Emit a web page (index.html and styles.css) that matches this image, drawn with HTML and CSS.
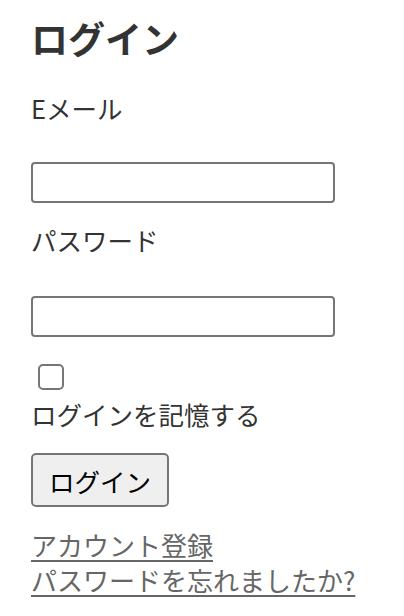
FILE: index.html
```html
<!DOCTYPE html>
<html lang="ja">
<head>
<meta charset="utf-8">
<link rel="stylesheet" href="styles.css">
</head>
<body>
<main class="page">
  <h1 class="title">ログイン</h1>
  <form class="form">
    <label class="label" for="email">Eメール</label>
    <input class="field" id="email" type="email">
    <label class="label label-pw" for="pw">パスワード</label>
    <input class="field field-pw" id="pw" type="password">
    <div class="remember">
      <input class="check" id="remember" type="checkbox">
      <label class="remember-label" for="remember">ログインを記憶する</label>
    </div>
    <div class="actions"><button class="btn" type="button">ログイン</button></div>
  </form>
  <nav class="links">
    <a class="link" href="#">アカウント登録</a>
    <a class="link" href="#">パスワードを忘れましたか?</a>
  </nav>
</main>
</body>
</html>
```

FILE: styles.css
```css
html, body {
  margin: 0;
  padding: 0;
  background: #fff;
}
body {
  font-family: "Noto Sans CJK JP", "Noto Sans", sans-serif;
  font-size: 25.5px;
  line-height: 35px;
  color: #333;
}
.page {
  padding: 12px 31px 0 31px;
}
.title {
  margin: 0;
  font-size: 37px;
  line-height: 52px;
  font-weight: 700;
  color: #333;
}
.form {
  display: flex;
  flex-direction: column;
  align-items: flex-start;
  margin-top: 26px;
}
.label {
  display: block;
}
.field {
  box-sizing: border-box;
  width: 304px;
  height: 41px;
  margin: 37px 0 0 0;
  border: 2px solid #767676;
  border-radius: 4px;
  background: #fff;
  font: inherit;
  padding: 0 6px;
}
.field-pw {
  margin-top: 39px;
}
.label-pw {
  margin-top: 19px;
}
.remember {
  display: flex;
  flex-direction: column;
  align-items: flex-start;
  margin-top: 24px;
}
.check {
  appearance: none;
  -webkit-appearance: none;
  box-sizing: border-box;
  width: 26px;
  height: 26px;
  margin: 3px 0 0 7px;
  border: 2px solid #767676;
  border-radius: 5px;
  background: #fff;
}
.remember-label {
  margin-top: 6px;
  color: #333;
}
.actions {
  margin-top: 22px;
}
.btn {
  box-sizing: border-box;
  width: 138px;
  height: 54px;
  border: 2px solid #767676;
  border-radius: 5px;
  background: #efefef;
  color: #000;
  font-family: inherit;
  font-size: 25.5px;
  line-height: 35px;
  padding: 0;
}
.links {
  display: flex;
  flex-direction: column;
  align-items: flex-start;
  margin-top: 20px;
}
.link {
  color: #666;
  font-size: 26px;
  text-decoration: underline;
  text-decoration-thickness: 2px;
  text-underline-offset: 4px;
}
```
